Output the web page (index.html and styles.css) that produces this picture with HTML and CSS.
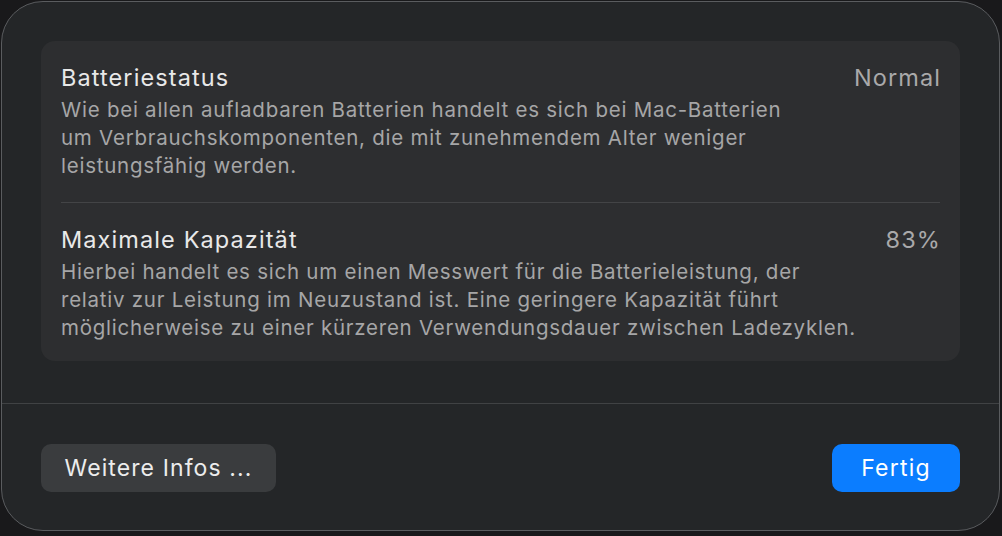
FILE: index.html
```html
<!DOCTYPE html>
<html lang="de">
<head>
    <meta charset="UTF-8">
    <meta name="viewport" content="width=device-width, initial-scale=1.0">
    <title>Batteriezustand</title>
    <link rel="stylesheet" href="styles.css">
</head>
<body>
    <div class="window">
        <div class="card">
            <div class="row">
                <div class="row-head">
                    <span class="row-title">Batteriestatus</span>
                    <span class="row-value">Normal</span>
                </div>
                <p class="row-desc">Wie bei allen aufladbaren Batterien handelt es sich bei Mac-Batterien<br>um Verbrauchskomponenten, die mit zunehmendem Alter weniger<br>leistungsfähig werden.</p>
            </div>
            <div class="divider"></div>
            <div class="row">
                <div class="row-head">
                    <span class="row-title">Maximale Kapazität</span>
                    <span class="row-value">83%</span>
                </div>
                <p class="row-desc">Hierbei handelt es sich um einen Messwert für die Batterieleistung, der<br>relativ zur Leistung im Neuzustand ist. Eine geringere Kapazität führt<br>möglicherweise zu einer kürzeren Verwendungsdauer zwischen Ladezyklen.</p>
            </div>
        </div>

        <div class="footer">
            <button class="btn btn-more">Weitere Infos ...</button>
            <button class="btn btn-primary">Fertig</button>
        </div>
    </div>
</body>
</html>
```

FILE: styles.css
```css
body {
    margin: 0;
    background-color: #19191b;
    font-family: Inter, "Noto Sans", sans-serif;
}

.window {
    margin: 1px 2px 0 1px;
    height: 530px;
    box-sizing: border-box;
    padding-top: 39px;
    background-color: #242628;
    border: 1px solid #5a5c5f;
    border-radius: 42px;
}

/* Info card */
.card {
    margin: 0 39px 0 39px;
    padding: 23px 20px 19px 20px;
    background-color: #2d2e30;
    border-radius: 14px;
}

.row-head {
    display: flex;
    justify-content: space-between;
    line-height: 28px;
    font-size: 23.5px;
    letter-spacing: 1.1px;
}

.row-title {
    color: #e8e8e8;
}

.row-value {
    color: #a9a9aa;
    margin-right: -1px;
}

.row-desc {
    margin: 4px 0 0 0;
    font-size: 20.5px;
    line-height: 28px;
    letter-spacing: 0.75px;
    color: #a6a6a7;
}

.divider {
    height: 1px;
    margin: 22px 0 23px 0;
    background-color: #434446;
}

/* Buttons */
.footer {
    display: flex;
    justify-content: space-between;
    margin-top: 42px;
    padding: 40px 39px 0 39px;
    border-top: 1px solid #404244;
}

.btn {
    height: 48px;
    padding: 0;
    font-family: inherit;
    font-size: 23px;
    letter-spacing: 1.2px;
    color: #ececec;
    background-color: #3a3c3e;
    border: none;
    border-radius: 10px;
}

.btn-more {
    width: 235px;
    letter-spacing: 1.1px;
}

.btn-primary {
    width: 128px;
    color: #fff;
    background-color: #0b7dff;
}
```
